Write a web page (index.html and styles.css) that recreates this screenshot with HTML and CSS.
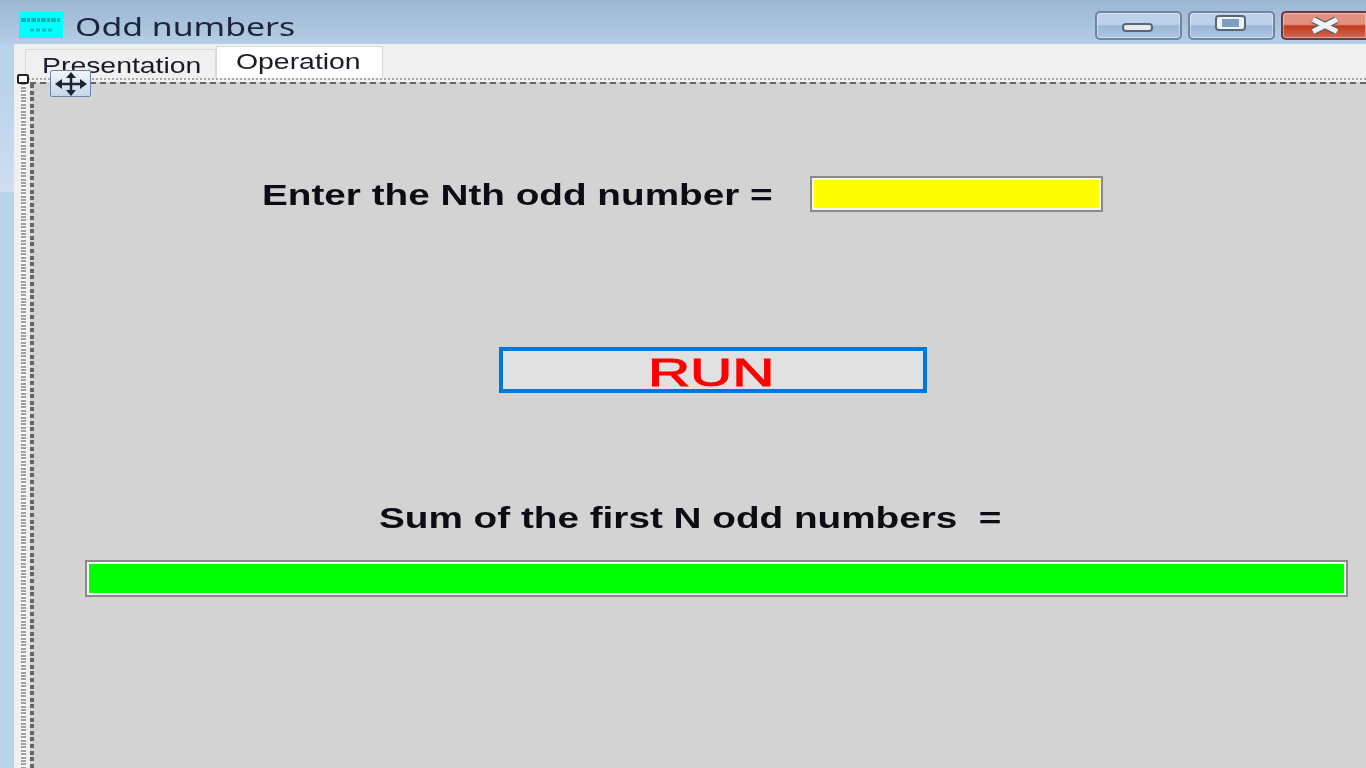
FILE: index.html
```html
<!DOCTYPE html>
<html>
<head>
    <title>Odd numbers</title>
    <meta name="viewport" content="width=device-width, initial-scale=1">
    <link rel="stylesheet" href="styles.css">
</head>
<body>
    <header class="titlebar">
        <svg class="app-icon" width="44" height="26" viewBox="0 0 44 26">
            <rect width="44" height="26" fill="#00ffff"/>
            <path d="M2 8 H42" stroke="#1f9090" stroke-width="4" stroke-dasharray="5 1 3 1" opacity="0.7"/>
            <path d="M11 18 H34" stroke="#1f9090" stroke-width="3" stroke-dasharray="4 2" opacity="0.6"/>
        </svg>
        <span class="title stretch">Odd numbers</span>
        <div class="win-buttons">
            <div class="win-btn"><span class="min-glyph"></span></div>
            <div class="win-btn"><span class="max-glyph"></span></div>
            <div class="win-btn close-btn">
                <svg class="close-glyph" width="32" height="17" viewBox="0 0 32 17">
                    <path d="M4 2.5 L28 14.5 M28 2.5 L4 14.5" stroke="#56606c" stroke-width="7.5"/>
                    <path d="M4 2.5 L28 14.5 M28 2.5 L4 14.5" stroke="#f2f2f2" stroke-width="5"/>
                </svg>
            </div>
        </div>
    </header>
    <main class="client">
        <nav class="tabs">
            <div class="tab tab-back"><span class="stretch">Presentation</span></div>
            <div class="tab tab-active"><span class="stretch">Operation</span></div>
        </nav>
        <div class="selection">
            <span class="handle"></span>
            <div class="move-icon">
                <svg width="32" height="24" viewBox="0 0 32 24">
                    <path d="M16 2 V22 M3 12 H29" stroke="#1c2430" stroke-width="2.5"/>
                    <path d="M16 0 L11 6 H21 Z M16 24 L11 18 H21 Z M0 12 L7 7 V17 Z M32 12 L25 7 V17 Z" fill="#1c2430"/>
                </svg>
            </div>
            <section class="form">
                <div class="row-first">
                    <span class="field-label stretch">Enter the Nth odd number =</span>
                    <div class="field field-input"></div>
                </div>
                <div class="run-btn"><span class="run-text">RUN</span></div>
                <div class="sum-label stretch">Sum of the first N odd numbers  =</div>
                <div class="field field-output"></div>
            </section>
        </div>
    </main>
</body>
</html>
```
FILE: styles.css
```css
* {
    margin: 0;
    padding: 0;
    box-sizing: border-box;
}

html, body {
    height: 768px;
    overflow: hidden;
}

body {
    background:
        linear-gradient(#bad3ec, #cfdff1) 0 90px / 14px 102px no-repeat,
        #bad3ec;
    font-family: 'Liberation Sans', Arial, sans-serif;
    display: flex;
    flex-direction: column;
}

/* the whole screenshot is stretched sideways and soft, text has to follow */
.stretch {
    display: inline-block;
    transform: scaleX(1.29);
    transform-origin: left center;
    white-space: pre;
    filter: blur(0.4px);
}

.titlebar {
    height: 44px;
    flex-shrink: 0;
    background: linear-gradient(#9cb7d3, #b5cde6);
    display: flex;
    align-items: flex-start;
    padding: 12px 0 0 19px;
}

.app-icon {
    flex-shrink: 0;
}

.title {
    font-family: 'Noto Sans', sans-serif;
    font-size: 26px;
    line-height: 28px;
    color: #1b2440;
    margin-left: 12px;
    transform: scaleX(1.3);
}

.win-buttons {
    margin-left: auto;
    margin-top: -1px;
    display: flex;
    gap: 6px;
}

.win-btn {
    width: 87px;
    height: 29px;
    border: 2px solid #6f86a3;
    border-radius: 5px;
    box-shadow: inset 0 0 0 1px rgba(255, 255, 255, 0.4);
    background: linear-gradient(#bdd2ea 0 45%, #9ab7d6 52%, #adc7e3 100%);
    display: flex;
    align-items: center;
    justify-content: center;
    filter: blur(0.4px);
}

.close-btn {
    width: 85px;
    border-color: #6d3a42;
    border-right: 0;
    border-radius: 5px 0 0 5px;
    background: linear-gradient(#e29080 0 45%, #c23a1c 52%, #cf6a55 100%);
}

.min-glyph {
    width: 31px;
    height: 9px;
    margin: 3px 2px 0 0;
    background: #e8eaee;
    border: 2px solid #5a6678;
    border-radius: 4px;
}

.max-glyph {
    width: 29px;
    height: 14px;
    margin: -5px 2px 0 0;
    background: #7f9dbd;
    border-style: solid;
    border-color: #eef2f6;
    border-width: 3px 6px;
    outline: 2px solid #5a6678;
    outline-offset: -1px;
    border-radius: 3px;
}

.close-glyph {
    margin-top: -1px;
}

.client {
    flex: 1;
    margin-left: 14px;
    background: #f0f0f0;
    display: flex;
    flex-direction: column;
    min-height: 0;
}

.tabs {
    height: 34px;
    flex-shrink: 0;
    padding-left: 11px;
    display: flex;
    align-items: flex-end;
    overflow: hidden;
}

.tab {
    font-size: 22px;
    line-height: 24px;
    color: #1a1a2a;
    border: 1px solid #d9d9d9;
    border-bottom: 0;
}

.tab-back {
    width: 191px;
    height: 29px;
    padding: 4px 0 0 16px;
    background: #f0f0f0;
}

.tab-active {
    width: 167px;
    height: 32px;
    padding: 3px 0 0 19px;
    background: #fff;
}

.selection {
    position: relative;
    flex: 1;
    margin-left: 7px;
    border-top: 2px dotted #a8a8a8;
    padding: 2px 0 0 9px;
    background: repeating-linear-gradient(#a0a0a0 0 2px, #fafafa 2px 3.4px) 0 0 / 5px 100% no-repeat;
    display: flex;
    min-height: 0;
}

.handle {
    position: absolute;
    left: -4px;
    top: -6px;
    width: 12px;
    height: 10px;
    background: #fff;
    border: 2px solid #222;
    border-radius: 2px;
}

.move-icon {
    position: absolute;
    left: 29px;
    top: -10px;
    width: 41px;
    height: 27px;
    background: linear-gradient(#f2f6fb, #c5d5ea);
    border: 1px solid #6f86a8;
    border-radius: 2px;
    display: flex;
    align-items: center;
    justify-content: center;
    z-index: 1;
    filter: blur(0.4px);
}

.form {
    flex: 1;
    background:
        repeating-linear-gradient(#666 0 4px, transparent 4px 6.6px) 0 0 / 4px 100% no-repeat,
        #d3d3d3;
    border-top: 2px dashed #666;
    padding-top: 92px;
    min-width: 0;
}

.row-first {
    display: flex;
    align-items: center;
    padding-left: 232px;
}

.field-label {
    width: 370px;
    margin-right: 178px;
    font-size: 30px;
    font-weight: bold;
    color: #0c0c14;
    position: relative;
    top: 1px;
}

.field {
    border: 2px solid #8a8a8a;
    outline: 2px solid #f4f4f4;
    outline-offset: -4px;
}

.field-input {
    width: 293px;
    height: 36px;
    background: #ffff00;
}

.run-btn {
    width: 428px;
    height: 46px;
    margin: 135px 0 0 469px;
    background: #e1e1e1;
    border: 4px solid #0078d7;
    display: flex;
    align-items: center;
    justify-content: center;
}

.run-text {
    font-size: 39px;
    line-height: 38px;
    color: #ff0000;
    -webkit-text-stroke: 1px #ff0000;
    transform: scaleX(1.5);
    filter: blur(0.4px);
    padding-top: 5px;
    margin-right: 4px;
}

.sum-label {
    display: block;
    margin: 108px 0 0 349px;
    width: 480px;
    height: 34px;
    line-height: 34px;
    font-size: 30px;
    font-weight: bold;
    color: #0c0c14;
}

.field-output {
    width: 1263px;
    height: 37px;
    margin: 25px 0 0 55px;
    background: #00ff00;
}
```
